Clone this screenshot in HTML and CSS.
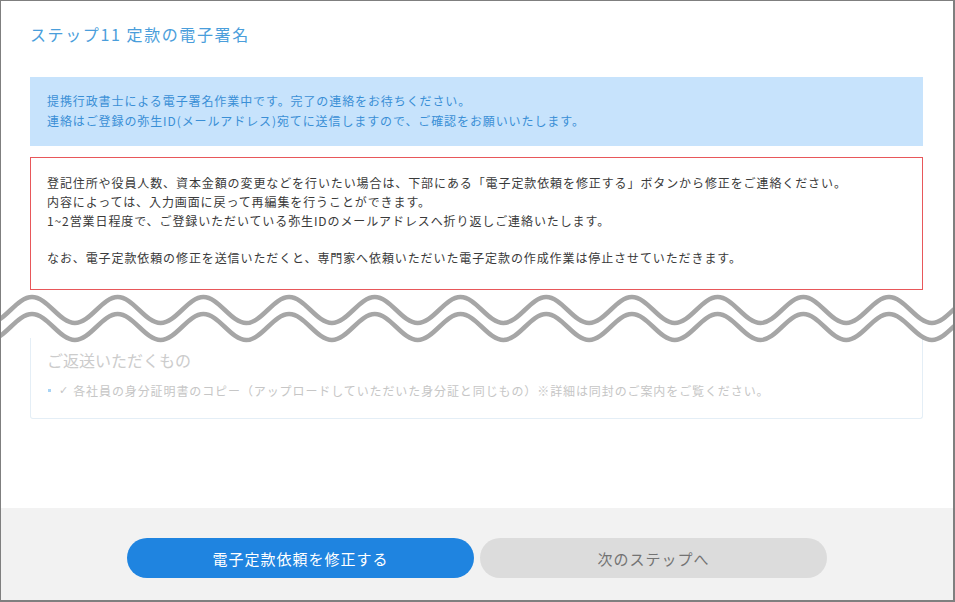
FILE: index.html
```html
<html>
  <head>
    <meta charset="utf-8">
    <meta name="viewport" content="width=device-width, initial-scale=1.0">
    <title>ステップ11 定款の電子署名</title>
    <link rel="stylesheet" href="styles.css">
  </head>
  <body>
    <div class="frame">
      <main class="content">
        <h1 class="step-title">ステップ11 定款の電子署名</h1>

        <div class="notice">
          <p>提携行政書士による電子署名作業中です。完了の連絡をお待ちください。</p>
          <p>連絡はご登録の弥生ID(メールアドレス)宛てに送信しますので、ご確認をお願いいたします。</p>
        </div>

        <div class="caution">
          <p>登記住所や役員人数、資本金額の変更などを行いたい場合は、下部にある「電子定款依頼を修正する」ボタンから修正をご連絡ください。<br>
          内容によっては、入力画面に戻って再編集を行うことができます。<br>
          1~2営業日程度で、ご登録いただいている弥生IDのメールアドレスへ折り返しご連絡いたします。</p>
          <p>なお、電子定款依頼の修正を送信いただくと、専門家へ依頼いただいた電子定款の作成作業は停止させていただきます。</p>
        </div>
      </main>

      <!-- page is cut here: wavy tear line -->
      <svg class="cut" viewBox="0 0 955 54" width="955" height="54">
        <defs>
          <path id="wave" d="M-53.7 6 C-38.2 6 -26.4 32 -10.9 32 S16.5 6 32 6 S59.4 32 74.9 32 S102.2 6 117.7 6 S145.1 32 160.6 32 S187.9 6 203.4 6 S230.8 32 246.3 32 S273.6 6 289.1 6 S316.4 32 331.9 32 S359.3 6 374.8 6 S402.2 32 417.7 32 S445 6 460.5 6 S487.9 32 503.4 32 S530.7 6 546.2 6 S573.6 32 589.1 32 S616.4 6 631.9 6 S659.3 32 674.8 32 S702.1 6 717.6 6 S745 32 760.5 32 S787.8 6 803.3 6 S830.7 32 846.2 32 S873.5 6 889 6 S916.4 32 931.9 32 S959.2 6 974.7 6"/>
          <path id="below" d="M-53.7 6 C-38.2 6 -26.4 32 -10.9 32 S16.5 6 32 6 S59.4 32 74.9 32 S102.2 6 117.7 6 S145.1 32 160.6 32 S187.9 6 203.4 6 S230.8 32 246.3 32 S273.6 6 289.1 6 S316.4 32 331.9 32 S359.3 6 374.8 6 S402.2 32 417.7 32 S445 6 460.5 6 S487.9 32 503.4 32 S530.7 6 546.2 6 S573.6 32 589.1 32 S616.4 6 631.9 6 S659.3 32 674.8 32 S702.1 6 717.6 6 S745 32 760.5 32 S787.8 6 803.3 6 S830.7 32 846.2 32 S873.5 6 889 6 S916.4 32 931.9 32 S959.2 6 974.7 6 L980 80 L-60 80 Z"/>
          <mask id="gap">
            <use href="#below" fill="#fff"/>
            <use href="#below" y="17" fill="#000"/>
          </mask>
        </defs>
        <rect x="0" y="0" width="955" height="54" fill="#fff" mask="url(#gap)"/>
        <use href="#wave" fill="none" stroke="#a6a6a6" stroke-width="4.5"/>
        <use href="#wave" y="17" fill="none" stroke="#a6a6a6" stroke-width="4.5"/>
      </svg>

      <div class="content">
        <section class="return-box">
          <h2>ご返送いただくもの</h2>
          <ul>
            <li><span class="check">✓</span>各社員の身分証明書のコピー（アップロードしていただいた身分証と同じもの）※詳細は同封のご案内をご覧ください。</li>
          </ul>
        </section>
      </div>

      <footer class="actions">
        <button class="btn btn-primary" type="button">電子定款依頼を修正する</button>
        <button class="btn btn-disabled" type="button" disabled>次のステップへ</button>
      </footer>
    </div>
  </body>
</html>
```

FILE: styles.css
```css
html, body {
  margin: 0;
  padding: 0;
  background: #fff;
}
body {
  font-family: "Noto Sans CJK JP", "Noto Sans", sans-serif;
  color: #333;
}
.frame {
  width: 955px;
  height: 602px;
  box-sizing: border-box;
  border: 1px solid #7f7f7f;
  border-right-width: 2px;
  border-bottom-width: 2px;
  display: flex;
  flex-direction: column;
  overflow: hidden;
}
.content {
  padding: 0 30px 0 29px;
}
.step-title {
  margin: 21px 0 31px;
  font-size: 16px;
  line-height: 24px;
  font-weight: normal;
  letter-spacing: 1.6px;
  color: #4a9edb;
}
.notice {
  background-color: #c7e3fc;
  color: #3a8fd6;
  padding: 14px 16px 15px 17px;
  font-size: 12px;
  line-height: 20px;
  letter-spacing: 0.9px;
}
.notice p {
  margin: 0;
}
.caution {
  margin-top: 11px;
  border: 1px solid #e8575a;
  padding: 16px 16px 21px;
  font-size: 12px;
  line-height: 18.75px;
  letter-spacing: 0.9px;
  color: #3a3a3a;
}
.caution p {
  margin: 0;
}
.caution p + p {
  margin-top: 18.75px;
}
.cut {
  display: block;
  flex-shrink: 0;
  width: 955px;
  height: 54px;
  margin: 1px -2px -7px -1px;
  position: relative;
  z-index: 1;
}
.return-box {
  border: 1px solid #e4eef6;
  border-top: none;
  border-radius: 0 0 3px 3px;
  padding: 10px 16px 17px;
}
.return-box h2 {
  margin: 0 0 9px;
  font-size: 16px;
  line-height: 24px;
  font-weight: normal;
  color: #cccccc;
}
.return-box ul {
  margin: 0;
  padding: 0;
  list-style: none;
}
.return-box li {
  display: flex;
  align-items: center;
  font-size: 12px;
  line-height: 20px;
  letter-spacing: 0.9px;
  color: #c6c6c6;
}
.return-box li::before {
  content: '';
  width: 3px;
  height: 3px;
  background: #a9d4f5;
  margin: 0 8px 0 1px;
}
.check {
  font-family: "DejaVu Sans", sans-serif;
  font-size: 11px;
  margin-right: 5px;
  letter-spacing: 0;
}
.actions {
  margin-top: auto;
  height: 92px;
  box-sizing: border-box;
  background-color: #f2f2f2;
  display: flex;
  justify-content: center;
  gap: 6px;
  padding-top: 30px;
}
.btn {
  width: 347px;
  height: 40px;
  border: none;
  border-radius: 20px;
  font-family: "Noto Sans CJK JP", "Noto Sans", sans-serif;
  font-size: 15px;
  letter-spacing: 1px;
  padding: 0;
}
.btn-primary {
  background-color: #1f84e0;
  color: #fff;
}
.btn-disabled {
  background-color: #dcdcdc;
  color: #737373;
}
```
